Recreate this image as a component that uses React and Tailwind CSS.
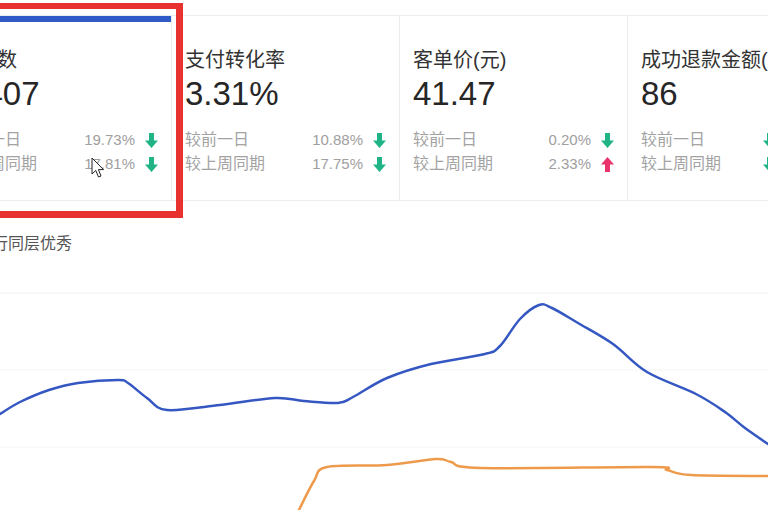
import React from "react";

const FONT = "font-['Liberation_Sans','Noto_Sans_CJK_SC',sans-serif]";

function Arrow({ up }) {
  const color = up ? "#e8336b" : "#1fb386";
  return (
    <svg width="13" height="15" viewBox="0 0 13 15" className="shrink-0">
      {up ? (
        <path d="M6.5 0 L13 7.5 L9 7.5 L9 15 L4 15 L4 7.5 L0 7.5 Z" fill={color} />
      ) : (
        <path d="M4 0 L9 0 L9 7.5 L13 7.5 L6.5 15 L0 7.5 L4 7.5 Z" fill={color} />
      )}
    </svg>
  );
}

function Row({ label, pct, up }) {
  return (
    <div className="flex items-center justify-between h-[24px]">
      <span className="text-[16px] text-[#a3a3a3]">{label}</span>
      <span className="flex items-center gap-[10px]">
        <span className="text-[15px] text-[#a0a0a0]">{pct}</span>
        <Arrow up={up} />
      </span>
    </div>
  );
}

function Card({ title, value, rows, active }) {
  return (
    <div className="w-[228px] shrink-0 border-r border-[#ececec] flex flex-col">
      {active ? <div className="h-[6px] bg-[#2f5bc6]" /> : null}
      <div className={active ? "px-[13px] pt-[24px]" : "px-[13px] pt-[30px]"}>
        <div className="text-[20px] leading-[28px] text-[#333] whitespace-nowrap">{title}</div>
        <div className="text-[33px] leading-[40px] text-[#262626]">{value}</div>
        <div className="mt-[14px]">
          {rows.map((r, i) => (
            <Row key={i} {...r} />
          ))}
        </div>
      </div>
    </div>
  );
}

function pathFrom(pts) {
  let d = `M${pts[0][0]} ${pts[0][1]}`;
  for (let i = 0; i < pts.length - 1; i++) {
    const p0 = pts[i - 1] || pts[i];
    const p1 = pts[i];
    const p2 = pts[i + 1];
    const p3 = pts[i + 2] || p2;
    const c1x = p1[0] + (p2[0] - p0[0]) / 6;
    const c1y = p1[1] + (p2[1] - p0[1]) / 6;
    const c2x = p2[0] - (p3[0] - p1[0]) / 6;
    const c2y = p2[1] - (p3[1] - p1[1]) / 6;
    d += ` C${c1x} ${c1y} ${c2x} ${c2y} ${p2[0]} ${p2[1]}`;
  }
  return d;
}

const blue = [
  [0, 414], [20, 402], [49, 390], [78, 383], [118, 380], [128, 383], [147, 398], [167, 410],
  [220, 405], [275, 398], [304, 401], [338, 403], [353, 397], [387, 378], [431, 364],
  [485, 354], [500, 346], [520, 319], [539, 305], [552, 308], [578, 323], [613, 344],
  [647, 372], [696, 394], [725, 412], [745, 428], [768, 444],
].map(([x, y]) => [x, y - 280]);

const orange = [
  [298, 512], [314, 481], [327, 467], [387, 465], [436, 459], [451, 462], [480, 468],
  [652, 467], [667, 470], [691, 475], [768, 476],
].map(([x, y]) => [x, y - 280]);

export default function App() {
  return (
    <div className={`relative w-[768px] h-[510px] overflow-hidden bg-white ${FONT}`}>
      <div className="h-[15px]" />
      <div className="flex ml-[-56px] h-[186px] border-y border-[#ececec]">
        <Card
          active
          title="访客数"
          value="1,407"
          rows={[
            { label: "较前一日", pct: "19.73%" },
            { label: "较上周同期", pct: "17.81%" },
          ]}
        />
        <Card
          title="支付转化率"
          value="3.31%"
          rows={[
            { label: "较前一日", pct: "10.88%" },
            { label: "较上周同期", pct: "17.75%" },
          ]}
        />
        <Card
          title="客单价(元)"
          value="41.47"
          rows={[
            { label: "较前一日", pct: "0.20%" },
            { label: "较上周同期", pct: "2.33%", up: true },
          ]}
        />
        <div className="w-[228px] shrink-0 px-[13px] pt-[30px]">
          <div className="text-[20px] leading-[28px] text-[#333] whitespace-nowrap">成功退款金额(元)</div>
          <div className="text-[33px] leading-[40px] text-[#262626]">86</div>
          <div className="mt-[14px]">
            <div className="flex items-center h-[24px]">
              <span className="w-[122px] shrink-0 text-[16px] text-[#a3a3a3]">较前一日</span>
              <Arrow />
            </div>
            <div className="flex items-center h-[24px]">
              <span className="w-[122px] shrink-0 text-[16px] text-[#a3a3a3]">较上周同期</span>
              <Arrow />
            </div>
          </div>
        </div>
      </div>
      <div className="h-[79px] pt-[32px]">
        <div className="ml-[-24px] text-[16px] leading-[22px] text-[#555] whitespace-nowrap">同行同层优秀</div>
      </div>
      <svg width="768" height="230" viewBox="0 0 768 230" className="block">
        <line x1="0" y1="13" x2="768" y2="13" stroke="#f1f1f1" strokeWidth="1" />
        <line x1="0" y1="90" x2="768" y2="90" stroke="#f5f5f5" strokeWidth="1" />
        <line x1="0" y1="167" x2="768" y2="167" stroke="#f5f5f5" strokeWidth="1" />
        <path d={pathFrom(blue)} fill="none" stroke="#3557c2" strokeWidth="2.5" strokeLinejoin="round" strokeLinecap="round" />
        <path d={pathFrom(orange)} fill="none" stroke="#ee9a4c" strokeWidth="2.5" strokeLinejoin="round" strokeLinecap="round" />
      </svg>

      <div className="absolute left-[-20px] top-[3px] w-[203px] h-[215px] border-[7px] border-t-[6px] border-[#e8322f] pointer-events-none" />
      <svg className="absolute left-[91px] top-[157px]" width="14" height="22" viewBox="0 0 14 22">
        <path d="M1 1 L1 17 L4.8 13.5 L7.5 20 L10 19 L7.4 12.6 L12.5 12.6 Z" fill="#fff" stroke="#222" strokeWidth="1" strokeLinejoin="round" />
      </svg>
    </div>
  );
}
